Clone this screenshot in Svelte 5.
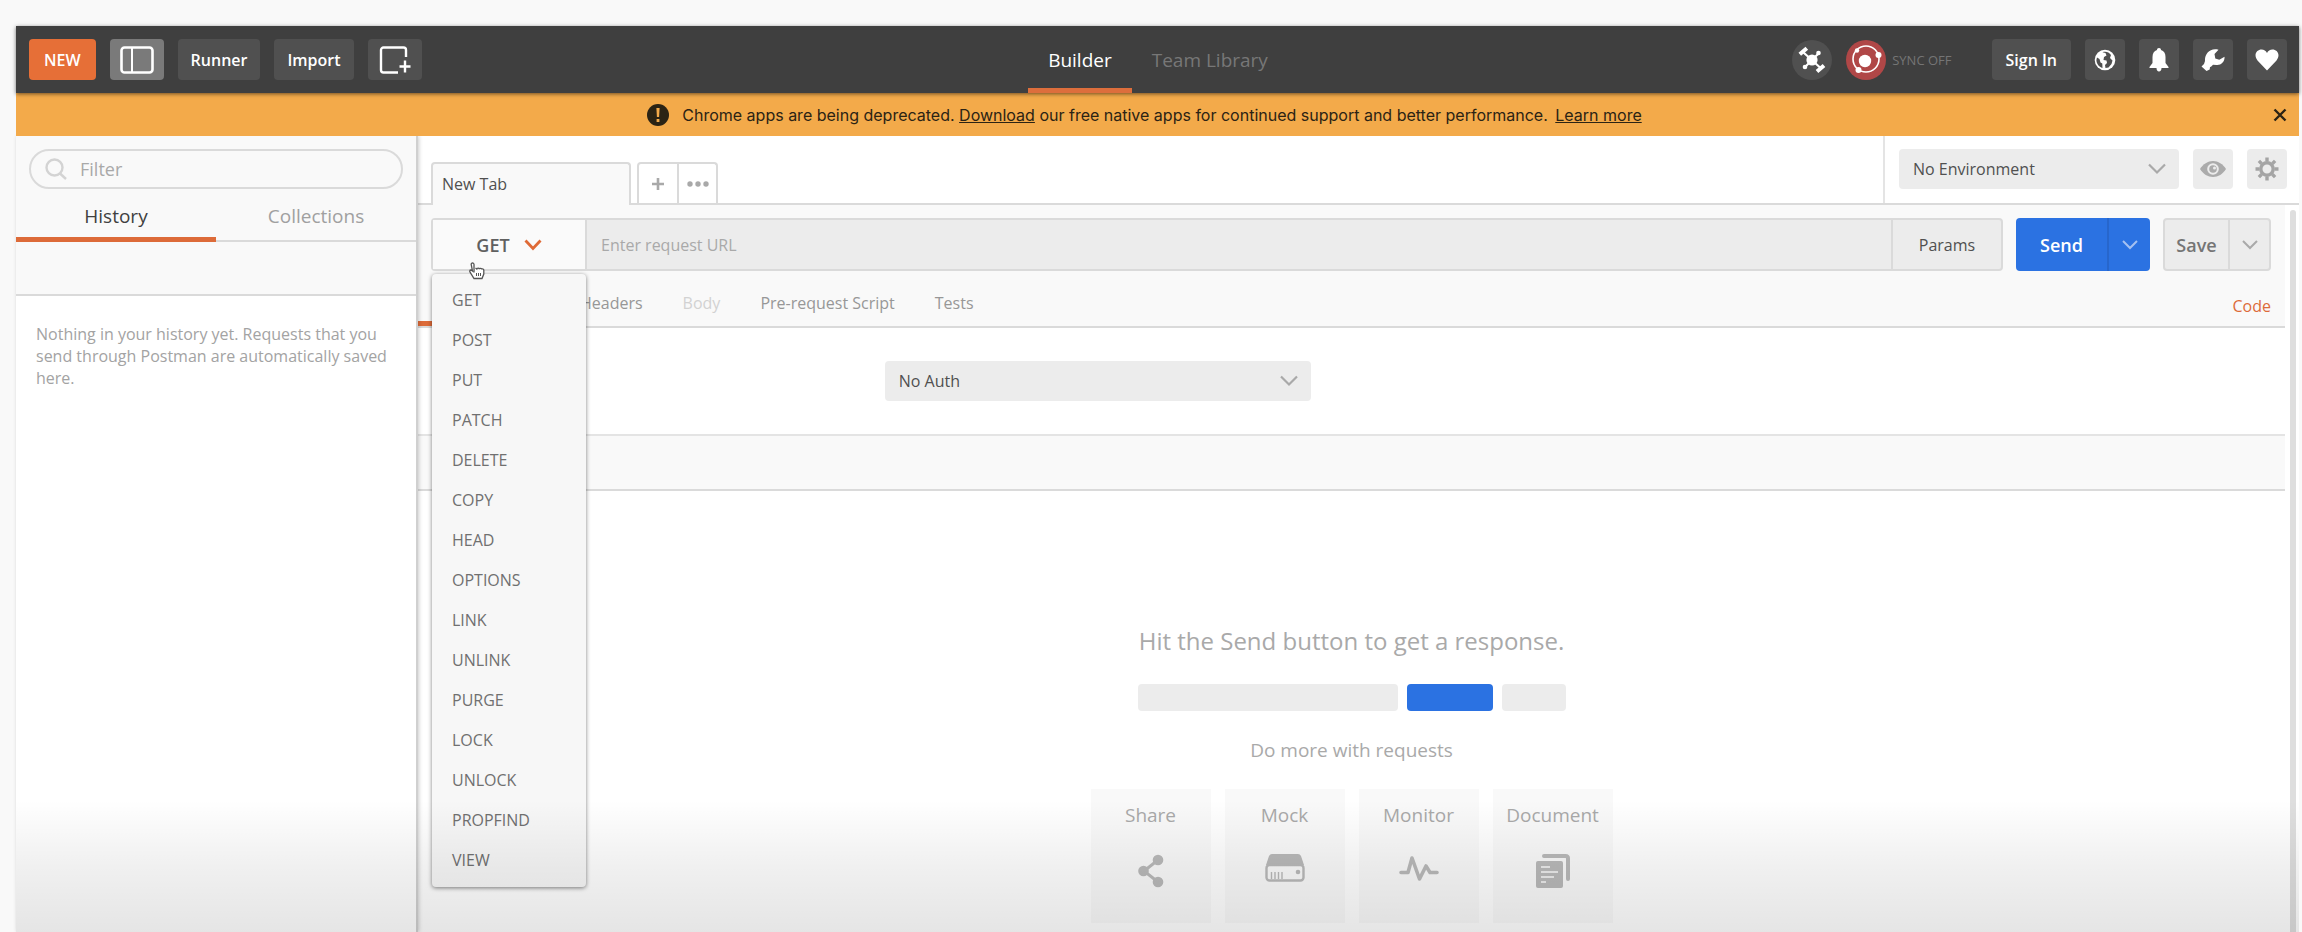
<script>
  const methods = ['GET', 'POST', 'PUT', 'PATCH', 'DELETE', 'COPY', 'HEAD', 'OPTIONS', 'LINK', 'UNLINK', 'PURGE', 'LOCK', 'UNLOCK', 'PROPFIND', 'VIEW'];
  let method = $state('GET');
  let filter = $state('');
  let url = $state('');
</script>

<div class="page">
  <div class="app">
    <header class="topbar">
      <div class="group left">
        <button class="btn new">NEW</button>
        <button class="btn square active" aria-label="Toggle sidebar">
          <svg width="34" height="28" viewBox="0 0 34 28" fill="none" stroke="#fff"><rect x="1.5" y="1.5" width="31" height="25" rx="3" stroke-width="2.6" /><path d="M12 2v24" stroke-width="2" /></svg>
        </button>
        <button class="btn">Runner</button>
        <button class="btn">Import</button>
        <button class="btn square" aria-label="New window">
          <svg width="32" height="28" viewBox="0 0 32 28" fill="none" stroke="#fff" stroke-width="2.4"><path d="M27 11V4a2.500 2.500 0 0 0-2.500-2.500H4.500A2.500 2.500 0 0 0 2 4v20a2.500 2.500 0 0 0 2.500 2.500H19M26 14.500v12M20.500 20.500h11" /></svg>
        </button>
      </div>
      <nav class="views">
        <a class="view current" href="#builder">Builder</a>
        <a class="view" href="#library">Team Library</a>
      </nav>
      <div class="group right">
        <button class="round" aria-label="Interceptor">
          <svg width="28" height="28" viewBox="0 0 28 28" fill="none" stroke="#fff"><circle cx="14" cy="14" r="5.600" fill="#fff" stroke="none" /><path d="M5.500 6.500L22 21.500M21 7L7 21" stroke-width="2.200" /><path d="M1.800 8.200l7-6M19 25.500l7-6" stroke-width="4" /><circle cx="20.500" cy="7" r="2.300" fill="#fff" stroke="none" /><circle cx="7" cy="21" r="2.300" fill="#fff" stroke="none" /></svg>
        </button>
        <div class="sync">
          <button class="round red" aria-label="Sync">
            <svg width="32" height="32" viewBox="0 0 32 32" fill="none"><circle cx="16" cy="15" r="13" stroke="#fff" stroke-width="1.600" /><circle cx="15" cy="17" r="6.200" fill="#fff" /><circle cx="28.500" cy="11" r="3" fill="#fff" /><circle cx="8.500" cy="26" r="3" fill="#fff" /><circle cx="7" cy="6.500" r="2.200" fill="#fff" /></svg>
          </button>
          <span>SYNC OFF</span>
        </div>
        <button class="btn signin">Sign In</button>
        <button class="btn icon" aria-label="Browser">
          <svg width="22" height="22" viewBox="0 0 22 22"><circle cx="11" cy="11" r="10.300" fill="#fff" /><path fill="#505050" d="M3 8.500l2.500 1.500 1 3.500 1.800 1 .2 4.500C5 18 2.300 14.500 2.400 11zM8.500 3.200c2-.7 4.500-.5 6.300.6L17 6l-1 3 2.500 2.500-1 3.500-3 3.500-3 .5-.5-3 2-2-.5-2.500-3-.5.500-3 2.500-1.500-1-2.500z" /></svg>
        </button>
        <button class="btn icon" aria-label="Notifications">
          <svg width="22" height="24" viewBox="0 0 22 24" fill="#fff"><path d="M11 0c1.300 0 2 .9 2 2 3 1 4.500 3.500 4.500 7v6l3 4v1H1.500v-1l3-4V9c0-3.500 1.500-6 4.500-7 0-1.100.7-2 2-2zM8.500 20h5c0 2-1 3.500-2.500 3.500s-2.500-1.500-2.500-3.500z" /></svg>
        </button>
        <button class="btn icon" aria-label="Preferences">
          <svg width="24" height="24" viewBox="0 0 24 24" fill="#fff"><path d="M17.500 1.800L13.500 6l.8 4.500 4 1.200 5.200-3c.5 5-3.500 8.800-8 8.300l-3.500-.3-2 2-1 .3-.3 2.500L5.500 23 .5 18.500 3 16l1-3C3.500 6 9-.5 17.500 1.800z" /></svg>
        </button>
        <button class="btn icon" aria-label="Favorites">
          <svg width="24" height="22" viewBox="0 0 24 22" fill="#fff"><path d="M12 21.500L2.500 11.500C-2 5.500 2 .5 6.500.5 9 .5 11 2 12 4c1-2 3-3.500 5.500-3.500C22 .5 26 5.500 21.500 11.500z" /></svg>
        </button>
      </div>
    </header>

    <div class="banner">
      <div class="notice">
        <svg width="22" height="22" viewBox="0 0 22 22"><circle cx="11" cy="11" r="11" fill="#2b2314" /><path d="M9.400 4h3.200l-.5 9h-2.200zM9.600 15h2.800v3H9.600z" fill="#f3aa4a" /></svg>
        <p>Chrome apps are being deprecated. <a href="#download">Download</a> our free native apps for continued support and better performance. <a class="more" href="#more">Learn more</a></p>
      </div>
      <button class="close" aria-label="Dismiss">
        <svg width="14" height="14" viewBox="0 0 14 14" stroke="#2b2314" stroke-width="2.400"><path d="M1.500 1.500l11 11M12.500 1.500l-11 11" /></svg>
      </button>
    </div>

    <div class="workspace">
      <aside class="sidebar">
        <div class="side-head">
          <label class="filter">
            <svg width="22" height="22" viewBox="0 0 22 22" fill="none" stroke="#d3d3d3" stroke-width="2.400"><circle cx="9.500" cy="9.500" r="8" /><path d="M15 15.500l6 5.500" /></svg>
            <input type="text" placeholder="Filter" aria-label="Filter" bind:value={filter} />
          </label>
          <div class="side-tabs">
            <button class="side-tab current">History</button>
            <button class="side-tab">Collections</button>
          </div>
          <div class="side-tools"></div>
        </div>
        <p class="empty">Nothing in your history yet. Requests that you send through Postman are automatically saved here.</p>
      </aside>

      <main class="main">
        <div class="tabbar">
          <div class="tabs">
            <button class="tab">New Tab</button>
            <div class="tab-actions">
              <button aria-label="Add tab"><svg width="12" height="12" viewBox="0 0 12 12" stroke="#a9a9a9" stroke-width="2.600"><path d="M6 0v12M0 6h12" /></svg></button>
              <button aria-label="Tab options"><svg width="22" height="6" viewBox="0 0 22 6" fill="#a9a9a9"><circle cx="3" cy="3" r="2.700" /><circle cx="11" cy="3" r="2.700" /><circle cx="19" cy="3" r="2.700" /></svg></button>
            </div>
          </div>
          <div class="env">
            <div class="select grow">
              <select aria-label="Environment"><option>No Environment</option></select>
              <svg width="18" height="12" viewBox="0 0 18 12" fill="none" stroke="#a9a9a9" stroke-width="2.200"><path d="M1 1.500l8 8 8-8" /></svg>
            </div>
            <button class="tool" aria-label="Environment quick look">
              <svg width="26" height="16" viewBox="0 0 26 16"><path fill="#ababab" d="M0 8C3 3 8 0 13 0s10 3 13 8c-3 5-8 8-13 8S3 13 0 8z" /><circle cx="13" cy="8" r="5.800" fill="#ececec" /><circle cx="13" cy="8" r="3.800" fill="#ababab" /><circle cx="14.500" cy="7" r="1.500" fill="#ececec" /></svg>
            </button>
            <button class="tool" aria-label="Settings">
              <svg width="24" height="24" viewBox="0 0 24 24" fill="none" stroke="#a4a4a4"><circle cx="12" cy="12" r="6.200" stroke-width="3.400" /><path stroke-width="3.400" d="M12 .5v4M12 19.500v4M.5 12h4M19.500 12h4M3.900 3.900l2.800 2.800M17.300 17.300l2.800 2.800M3.900 20.100l2.800-2.800M17.300 6.700l2.800-2.800" /></svg>
            </button>
          </div>
        </div>

        <div class="body">
          <div class="content">
            <div class="request">
              <div class="request-line">
                <div class="address">
                  <div class="method">
                    <button class="method-btn">{method}
                      <svg width="18" height="12" viewBox="0 0 18 12" fill="none" stroke="#df6a36" stroke-width="2.800"><path d="M1.500 1.500L9 9.500l7.500-8" /></svg>
                    </button>
                    <svg class="pointer" width="16" height="18" viewBox="0 0 16 18"><path fill="#fff" stroke="#555" stroke-width="1.300" d="M5 10.500V2.500c0-2-3-2-2.800 0L3.500 9 2 8C.5 8 .5 9.500 1.200 10.300L5 16.500h8l1.800-4.500V8c-.5-1.500-2-1.300-2-.5 0-1.500-2.200-1.500-2.400-.5-.3-1.300-2.400-1.300-2.600 0L6.500 6" /><path d="M7.500 11v3M9.500 11v3M11.500 11v3" stroke="#555" /></svg>
                    <ul class="menu">
                      {#each methods as m}
                        <li><button onclick={() => (method = m)}>{m}</button></li>
                      {/each}
                    </ul>
                  </div>
                  <input class="url" type="text" placeholder="Enter request URL" aria-label="Request URL" bind:value={url} />
                  <button class="params">Params</button>
                </div>
                <div class="split send">
                  <button class="action">Send</button>
                  <button class="drop" aria-label="Send options"><svg width="16" height="10" viewBox="0 0 16 10" fill="none" stroke="#a5c1f1" stroke-width="2"><path d="M1 1l7 7 7-7" /></svg></button>
                </div>
                <div class="split save">
                  <button class="action">Save</button>
                  <button class="drop" aria-label="Save options"><svg width="16" height="10" viewBox="0 0 16 10" fill="none" stroke="#a9a9a9" stroke-width="2"><path d="M1 1l7 7 7-7" /></svg></button>
                </div>
              </div>
              <div class="sections">
                <button class="section current" aria-label="Authorization"></button>
                <button class="section">Headers</button>
                <button class="section" disabled>Body</button>
                <button class="section">Pre-request Script</button>
                <button class="section">Tests</button>
                <a class="code" href="#code">Code</a>
              </div>
            </div>

            <div class="auth">
              <div class="select">
                <select aria-label="Authorization type"><option>No Auth</option></select>
                <svg width="18" height="12" viewBox="0 0 18 12" fill="none" stroke="#a9a9a9" stroke-width="2.200"><path d="M1 1.500l8 8 8-8" /></svg>
              </div>
            </div>

            <div class="response-head"></div>

            <section class="response">
              <h2>Hit the Send button to get a response.</h2>
              <div class="bars"><i></i><i class="blue"></i><i></i></div>
              <h3>Do more with requests</h3>
              <div class="cards">
                <button class="card">Share
                  <svg width="26" height="34" viewBox="0 0 26 34" fill="#b9b9b9"><path d="M20 6L6 17l14 11" fill="none" stroke="#b9b9b9" stroke-width="3" /><circle cx="20" cy="6" r="5.300" /><circle cx="5.500" cy="17" r="5.300" /><circle cx="20" cy="28" r="5.300" /></svg>
                </button>
                <button class="card">Mock
                  <svg width="40" height="28" viewBox="0 0 40 28"><path fill="#b9b9b9" d="M7 0h26q2 0 3 2l3 9H1l3-9q1-2 3-2z" /><rect x="1.500" y="11" width="37" height="15.500" rx="3" fill="none" stroke="#b9b9b9" stroke-width="2.400" /><circle cx="33" cy="18" r="2.300" fill="#b9b9b9" /><path d="M6.500 18v7M10 18v7M13.500 18v7M17 18v7" stroke="#b9b9b9" stroke-width="1.400" /></svg>
                </button>
                <button class="card">Monitor
                  <svg width="40" height="28" viewBox="0 0 40 28" fill="none" stroke="#b9b9b9" stroke-width="3.600" stroke-linejoin="round" stroke-linecap="round"><path d="M2 18.500h7L13 4l7.500 21L27 12l4 6.500h7" /></svg>
                </button>
                <button class="card">Document
                  <svg width="36" height="34" viewBox="0 0 36 34"><path d="M9 2h21.500q2.500 0 2.500 2.500V25" fill="none" stroke="#b9b9b9" stroke-width="4" stroke-linecap="round" /><rect x="1" y="7" width="27" height="27" rx="2" fill="#b9b9b9" /><path d="M6 13h9M6 18h17M6 23h13M6 28h5" stroke="#eaeaea" stroke-width="2.200" /></svg>
                </button>
              </div>
            </section>
          </div>
          <div class="track"><div class="thumb"></div></div>
        </div>
      </main>
    </div>
    <div class="fade"></div>
  </div>
</div>

<style>
  :global(body) { margin: 0; background: #f9f9f9; }
  .page { box-sizing: border-box; min-height: 100vh; padding: 26px 3px 0 16px; display: flex; font-family: "Open Sans", sans-serif; font-size: 16px; color: #505050; }
  .page :global(*) { box-sizing: border-box; }
  button, input, select { font: inherit; color: inherit; border: 0; margin: 0; padding: 0; background: none; }
  button { cursor: pointer; display: flex; align-items: center; justify-content: center; }
  a { color: inherit; }
  svg { display: block; flex: none; }
  .app { position: relative; flex: 1; min-width: 0; display: flex; flex-direction: column; background: #fff; }

  .topbar { position: relative; z-index: 2; height: 67px; padding: 0 12px 0 13px; background: #3f3f3f; display: grid; grid-template-columns: 1fr auto 1fr; box-shadow: 0 1px 4px rgba(0, 0, 0, .55); }
  .group { display: flex; align-items: center; gap: 14px; }
  .right { justify-content: flex-end; }
  .btn { height: 41px; padding: 0 13px; border-radius: 4px; background: #505050; color: #fff; font-weight: 600; }
  .new { padding: 0 15px; background: #e66f37; }
  .square { width: 54px; padding: 0; }
  .active { background: #7a7a7a; }
  .signin { padding: 0 14px; }
  .icon { width: 40px; padding: 0; }
  .views { display: flex; font-size: 19px; }
  .view { display: flex; align-items: center; padding: 5px 20px 0; border-bottom: 5px solid transparent; color: #777; text-decoration: none; }
  .view.current { color: #fff; font-weight: 500; border-color: #dd6e3c; }
  .round { width: 40px; height: 40px; border-radius: 50%; background: #505050; }
  .red { background: #b04747; }
  .sync { display: flex; align-items: center; gap: 6px; margin-right: 26px; font-size: 13px; color: #757575; }

  .banner { position: relative; z-index: 1; height: 43px; padding-right: 12px; background: #f3aa4a; color: #2b2314; display: flex; align-items: center; }
  .notice { flex: 1; display: flex; align-items: center; justify-content: center; gap: 13px; font-family: Inter, sans-serif; }
  .notice p { margin: 0; }
  .more { margin-left: 3px; }

  .workspace { flex: 1; display: flex; }
  .sidebar { position: relative; width: 402px; flex: none; border-right: 2px solid #d0d0d0; box-shadow: 1px 0 4px rgba(0, 0, 0, .2); }
  .side-head { background: #f9f9f9; border-bottom: 2px solid #dadada; padding-top: 13px; }
  .filter { height: 40px; margin: 0 13px; padding: 0 14px; border: 2px solid #dadada; border-radius: 20px; display: flex; align-items: center; gap: 13px; font-size: 18px; }
  .filter input { flex: 1; min-width: 0; outline: 0; }
  input::placeholder { color: #a9a9a9; opacity: 1; }
  .side-tabs { display: flex; height: 53px; font-size: 19px; border-bottom: 2px solid #dadada; }
  .side-tab { flex: 1; height: 53px; padding-top: 6px; border-bottom: 5px solid transparent; color: #a0a0a0; }
  .side-tab.current { color: #404040; border-color: #dd6b39; }
  .side-tools { height: 52px; }
  .empty { margin: 0; padding: 27px 25px 0 20px; line-height: 22px; color: #a3a3a3; }

  .main { flex: 1; min-width: 0; display: flex; flex-direction: column; }
  .tabbar { height: 69px; display: flex; border-bottom: 2px solid #dadada; }
  .tabs { flex: 1; display: flex; align-items: flex-end; gap: 6px; padding-left: 13px; }
  .tab { width: 200px; height: 43px; margin-bottom: -2px; padding: 0 9px 2px; justify-content: flex-start; border: 2px solid #dadada; border-bottom: 0; border-radius: 4px 4px 0 0; background: #f9f9f9; }
  .tab-actions { display: flex; height: 41px; border: 2px solid #dadada; border-bottom: 0; border-radius: 4px 4px 0 0; }
  .tab-actions button { width: 37px; }
  .tab-actions button:first-child { width: 40px; border-right: 2px solid #dadada; }
  .env { display: flex; gap: 14px; width: 416px; padding: 13px 12px 0 14px; border-left: 2px solid #e4e4e4; }
  .select { position: relative; display: flex; align-items: center; width: 426px; height: 40px; border-radius: 4px; background: #ececec; }
  .select.grow { flex: 1; width: auto; }
  .select select { appearance: none; width: 100%; height: 100%; padding: 0 14px; }
  .select svg { position: absolute; right: 13px; pointer-events: none; }
  .tool { width: 40px; height: 40px; border-radius: 4px; background: #ececec; }

  .body { flex: 1; display: flex; }
  .content { flex: 1; min-width: 0; display: flex; flex-direction: column; }
  .track { width: 14px; padding: 5px 3px 0 5px; display: flex; }
  .thumb { flex: 1; border-radius: 3px 3px 0 0; background: #dedede; }
  .request { background: #f9f9f9; border-bottom: 2px solid #dadada; }
  .request-line { display: flex; gap: 13px; padding: 13px 14px 0 13px; }
  .address { flex: 1; display: flex; height: 53px; border: 2px solid #dadada; border-radius: 4px; background: #ececec; }
  .method { position: relative; width: 154px; border-right: 2px solid #dadada; background: #fafafa; }
  .method-btn { width: 100%; height: 100%; gap: 14px; font-size: 18px; font-weight: 600; color: #606060; }
  .pointer { position: absolute; z-index: 3; left: 36px; top: 42px; }
  .menu { position: absolute; z-index: 2; left: -1px; top: 54px; width: 154px; margin: 0; padding: 6px 0 7px; list-style: none; background: #f7f7f7; border-radius: 4px; box-shadow: 0 1px 4px rgba(0, 0, 0, .5); }
  .menu button { width: 100%; height: 40px; padding: 0 20px; justify-content: flex-start; color: #707070; }
  .url { flex: 1; min-width: 0; padding: 0 14px; outline: 0; }
  .params { width: 110px; border-left: 2px solid #dadada; }
  .split { display: flex; height: 53px; border-radius: 4px; font-size: 18px; font-weight: 600; }
  .send { background: #2b72e2; color: #fff; }
  .send .action { width: 93px; border-right: 2px solid #2766cc; }
  .drop { width: 41px; }
  .save { border: 2px solid #dadada; background: #ececec; color: #757575; }
  .save .action { width: 65px; border-right: 2px solid #dadada; }
  .save .drop { width: 39px; }
  .sections { display: flex; height: 55px; padding-right: 14px; }
  .section { padding: 14px 20px 0; height: 55px; border-bottom: 5px solid transparent; color: #979797; }
  .section.current { width: 142px; border-color: #dd6b39; }
  .section:disabled { color: #d2d2d2; }
  .code { margin-left: auto; align-self: center; padding-top: 14px; color: #dd6b39; text-decoration: none; }
  .auth { height: 106px; display: flex; align-items: center; padding-left: 25%; }
  .response-head { height: 57px; background: #f9f9f9; border-top: 2px solid #e4e4e4; border-bottom: 2px solid #dadada; }
  .response { display: flex; flex-direction: column; align-items: center; padding: 132px 0 9px; color: #a9a9a9; }
  h2, h3 { margin: 0; font-weight: 400; }
  h2 { font-size: 24px; line-height: 36px; }
  .bars { display: flex; gap: 9px; margin-top: 25px; }
  .bars i { width: 64px; height: 27px; border-radius: 4px; background: #ececec; }
  .bars i:first-child { width: 260px; }
  .bars .blue { width: 86px; background: #2b72e2; }
  h3 { margin-top: 25px; font-size: 19px; line-height: 28px; }
  .cards { display: flex; gap: 14px; margin-top: 25px; }
  .card { width: 120px; height: 134px; flex-direction: column; justify-content: flex-start; padding-top: 13px; font-size: 19px; line-height: 26px; gap: 26px; background: #f9f9f9; }
  .fade { position: absolute; z-index: 4; left: 0; right: 0; bottom: 0; height: 132px; pointer-events: none; background: linear-gradient(rgba(0, 0, 0, 0), rgba(0, 0, 0, .06) 50%, rgba(0, 0, 0, .1)); }
</style>
